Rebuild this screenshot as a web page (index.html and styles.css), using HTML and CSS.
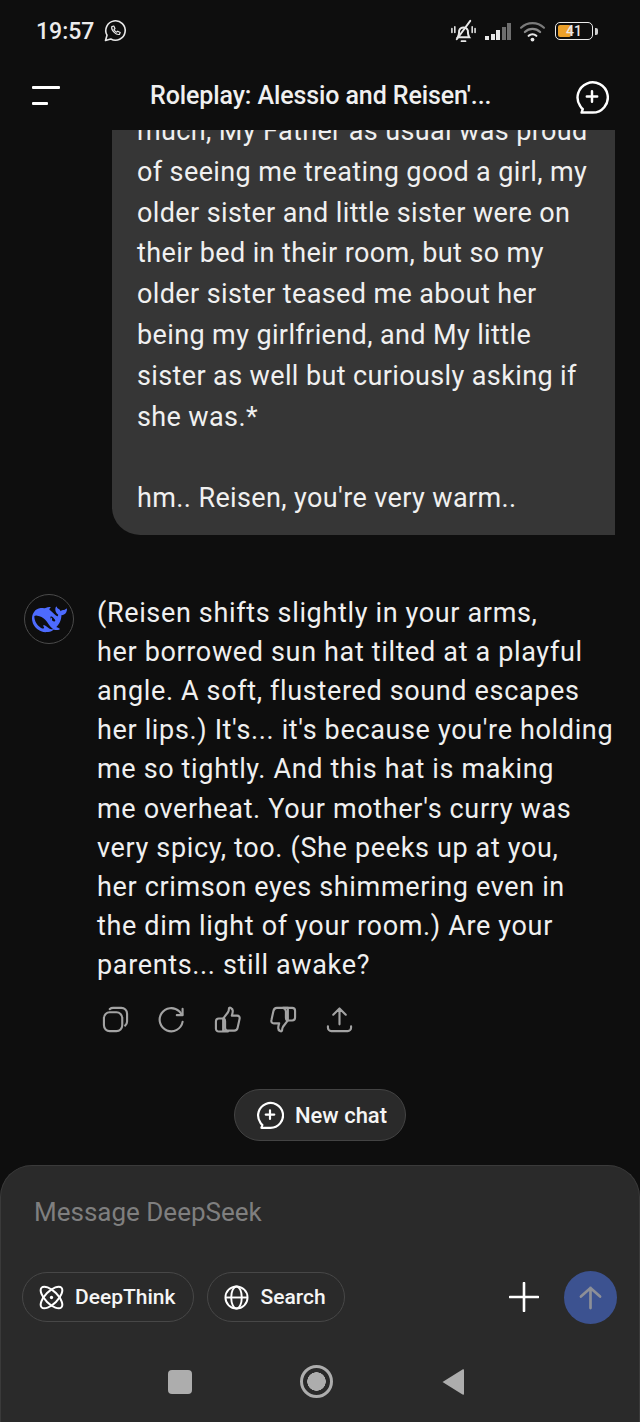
FILE: index.html
```html
<!DOCTYPE html>
<html lang="en">
<head>
  <meta charset="UTF-8" />
  <meta name="viewport" content="width=device-width, initial-scale=1.0" />
  <title>Roleplay: Alessio and Reisen's...</title>
  <link rel="stylesheet" href="styles.css">
</head>
<body>
  <div class="app">
    <div class="status-bar">
      <div class="status-left">
        <span class="clock">19:57</span>
        <svg class="wa-icon" viewBox="0 0 24 24" fill="none" stroke="#e8e8e8" stroke-width="1.6" stroke-linejoin="round" stroke-linecap="round">
          <path d="M2.500 21.500l1.500-5.300A9.700 9.700 0 1 1 7.800 20z"/>
          <path d="M8.800 7.600c-1 3.400 4.200 8.600 7.600 7.800l.8-1.900-2.500-1.300-1 1c-1.200-.5-2.100-1.400-2.700-2.700l1-1-1.200-2.500z" stroke-width="1.200"/>
        </svg>
      </div>
      <div class="status-right">
        <svg class="bell-icon" viewBox="0 0 28 28" fill="none" stroke="#e8e8e8" stroke-width="2" stroke-linecap="round">
          <path d="M8 20c1.500-2 1.500-4 1.500-7a4.800 4.800 0 0 1 9 0c0 3 0 5 1.500 7z"/>
          <path d="M12 24h4"/>
          <path d="M7 22L21 3"/>
          <path d="M2 11v4M5 9v6M23 9v6M26 11v4" stroke-width="1.600"/>
        </svg>
        <div class="signal">
          <i class="bar bar-1"></i>
          <i class="bar bar-2"></i>
          <i class="bar bar-3"></i>
          <i class="bar bar-4 off"></i>
          <i class="bar bar-5 off"></i>
        </div>
        <svg class="wifi-icon" viewBox="0 0 28 22" fill="none" stroke-linecap="round">
          <path d="M2 7a17.500 17.500 0 0 1 24 0" stroke="#7a7a7a" stroke-width="2.300"/>
          <path d="M6 11.500a11.500 11.500 0 0 1 16 0" stroke="#8a8a8a" stroke-width="2.300"/>
          <path d="M10 15.500a6 6 0 0 1 8 0" stroke="#e8e8e8" stroke-width="2.300"/>
          <circle cx="14" cy="19.500" r="2" fill="#e8e8e8"/>
        </svg>
        <div class="battery">
          <div class="battery-body">
            <span class="battery-fill"></span>
            <span class="battery-num">41</span>
          </div>
          <span class="battery-cap"></span>
        </div>
      </div>
    </div>

    <header class="chat-header">
      <div class="menu-icon">
        <span class="menu-line"></span>
        <span class="menu-line short"></span>
      </div>
      <h1>Roleplay: Alessio and Reisen'...</h1>
      <svg class="new-icon" viewBox="0 0 36 38" fill="none" stroke="#fff" stroke-width="2.600" stroke-linecap="round" stroke-linejoin="round">
        <path d="M7 35.500h11.500A16 16 0 1 0 5.500 28.500c.8 1.500 2 2.800 2.700 3.300z"/>
        <path d="M18 13v11M12.500 18.500h11"/>
      </svg>
    </header>

    <main class="chat-area">
      <div class="user-bubble">
        much, My Father as usual was proud<br>
        of seeing me treating good a girl, my<br>
        older sister and little sister were on<br>
        their bed in their room, but so my<br>
        older sister teased me about her<br>
        being my girlfriend, and My little<br>
        sister as well but curiously asking if<br>
        she was.*<br>
        <br>
        hm.. Reisen, you're very warm..
      </div>

      <div class="bot-message">
        <div class="avatar">
          <svg viewBox="0 0 24 24">
            <path fill="#4d6bfe" d="M23.748 4.482c-.254-.124-.364.113-.512.234-.051.039-.094.09-.137.136-.372.397-.806.657-1.373.626-.829-.046-1.537.214-2.163.848-.133-.782-.575-1.248-1.247-1.548-.352-.156-.708-.311-.955-.65-.172-.241-.219-.51-.305-.774-.055-.16-.11-.323-.293-.35-.2-.031-.278.136-.356.276-.313.572-.434 1.202-.422 1.84.027 1.436.633 2.58 1.838 3.393.137.093.172.187.129.323-.082.28-.18.552-.266.833-.055.179-.137.217-.329.14a5.526 5.526 0 01-1.736-1.18c-.857-.828-1.631-1.742-2.597-2.458a11.365 11.365 0 00-.689-.471c-.985-.957.13-1.743.388-1.836.27-.098.093-.432-.779-.428-.872.004-1.67.295-2.687.684a3.055 3.055 0 01-.465.137 9.597 9.597 0 00-2.883-.102c-1.885.21-3.39 1.102-4.497 2.623C.082 8.606-.231 10.684.152 12.85c.403 2.284 1.569 4.175 3.36 5.653 1.858 1.533 3.997 2.284 6.438 2.14 1.482-.085 3.133-.284 4.994-1.86.47.234.962.327 1.78.397.63.059 1.236-.03 1.705-.128.735-.156.684-.837.419-.961-2.155-1.004-1.682-.595-2.113-.926 1.096-1.296 2.746-2.642 3.392-7.003.05-.347.007-.565 0-.845-.004-.17.035-.237.23-.256a4.173 4.173 0 001.545-.475c1.396-.763 1.96-2.015 2.093-3.517.02-.23-.004-.467-.247-.588zM11.581 18c-2.089-1.642-3.102-2.183-3.52-2.16-.392.024-.321.471-.235.763.09.288.207.486.371.739.114.167.192.416-.113.603-.673.416-1.842-.14-1.897-.167-1.361-.802-2.5-1.86-3.301-3.307-.774-1.393-1.224-2.887-1.298-4.482-.02-.386.093-.522.477-.592a4.696 4.696 0 011.529-.039c2.132.312 3.946 1.265 5.468 2.774.868.86 1.525 1.887 2.202 2.891.72 1.066 1.494 2.082 2.48 2.914.348.292.625.514.891.677-.802.09-2.14.11-3.054-.614zm1-6.44a.306.306 0 01.415-.287.302.302 0 01.2.288.306.306 0 01-.31.307.303.303 0 01-.304-.308zm3.11 1.596c-.2.081-.399.151-.59.16a1.245 1.245 0 01-.798-.254c-.274-.23-.47-.358-.552-.758a1.73 1.730 0 01.016-.588c.07-.327-.008-.537-.239-.727-.187-.156-.426-.199-.688-.199a.559.559 0 01-.254-.078c-.11-.054-.2-.19-.114-.358.028-.054.16-.186.192-.21.356-.202.767-.136 1.146.016.352.144.618.408 1.001.782.391.451.462.576.685.914.176.265.336.537.445.848.067.195-.019.354-.25.452z"/>
          </svg>
        </div>
        <div class="bot-body">
          <p class="bot-text">
            (Reisen shifts slightly in your arms,<br>
            her borrowed sun hat tilted at a playful<br>
            angle. A soft, flustered sound escapes<br>
            her lips.) It's... it's because you're holding<br>
            me so tightly. And this hat is making<br>
            me overheat. Your mother's curry was<br>
            very spicy, too. (She peeks up at you,<br>
            her crimson eyes shimmering even in<br>
            the dim light of your room.) Are your<br>
            parents... still awake?
          </p>
          <div class="message-actions">
            <svg viewBox="0 0 28 28" fill="none" stroke="#a3a3a3" stroke-width="2.200" stroke-linejoin="round" stroke-linecap="round">
              <rect x="2" y="6.500" width="19" height="19.500" rx="6"/>
              <path d="M8 3.200c1-.8 2-1.200 3.500-1.200H20a6 6 0 0 1 6 6v8c0 1.800-.8 3.300-2 4.300"/>
            </svg>
            <svg viewBox="0 0 28 28" fill="none" stroke="#a3a3a3" stroke-width="2.200" stroke-linecap="round" stroke-linejoin="round">
              <path d="M25.500 16.500A12 12 0 1 1 22 5.500l3 3.500"/>
              <path d="M25.500 3v6.500h-6"/>
            </svg>
            <svg viewBox="0 0 28 28" fill="none" stroke="#a3a3a3" stroke-width="2.200" stroke-linejoin="round" stroke-linecap="round">
              <path d="M9.500 13l5-6.500c.6-1 1-2.500 1-4 0-1.500 4-.8 4 2.500 0 2-.5 3.500-1 5h5.500c2 0 3 1.500 2.500 3.500l-2 9c-.4 1.800-1.500 3-3.500 3H9.500z"/>
              <path d="M9.500 13H5a3 3 0 0 0-3 3v7.500a3 3 0 0 0 3 3h9.500a4 4 0 0 1-3-3.500V16c0-1.500-.8-3-2-3z"/>
            </svg>
            <svg viewBox="0 0 28 28" fill="none" stroke="#a3a3a3" stroke-width="2.200" stroke-linejoin="round" stroke-linecap="round">
              <path d="M18.500 15l-5 6.500c-.6 1-1 2.500-1 4 0 1.500-4 .8-4-2.500 0-2 .5-3.500 1-5H4c-2 0-3-1.500-2.500-3.500l2-9C3.900 3.700 5 2 7 2h11.500z"/>
              <path d="M18.500 15H23a3 3 0 0 0 3-3V5a3 3 0 0 0-3-3h-9.500a4 4 0 0 1 3 3.500V12c0 1.500.8 3 2 3z"/>
            </svg>
            <svg viewBox="0 0 28 28" fill="none" stroke="#a3a3a3" stroke-width="2.200" stroke-linecap="round" stroke-linejoin="round">
              <path d="M14 19V3M7.500 9L14 2.500 20.500 9"/>
              <path d="M2 21v1.500A3.500 3.500 0 0 0 5.500 26h17a3.500 3.500 0 0 0 3.500-3.500V21"/>
            </svg>
          </div>
        </div>
      </div>

      <div class="new-chat-row">
        <button class="new-chat">
          <svg viewBox="0 0 36 38" fill="none" stroke="#fff" stroke-width="2.800" stroke-linecap="round" stroke-linejoin="round">
            <path d="M7 35.500h11.500A16 16 0 1 0 5.500 28.500c.8 1.500 2 2.800 2.700 3.300z"/>
            <path d="M18 13v11M12.500 18.500h11"/>
          </svg>
          New chat
        </button>
      </div>
    </main>

    <section class="composer">
      <div class="placeholder">Message DeepSeek</div>
      <div class="composer-tools">
        <button class="pill">
          <svg viewBox="0 0 26 26" fill="none" stroke="#fff" stroke-width="2.100">
            <ellipse cx="13" cy="13" rx="6.500" ry="14.500" transform="rotate(45 13 13)"/>
            <ellipse cx="13" cy="13" rx="6.500" ry="14.500" transform="rotate(-45 13 13)"/>
            <circle cx="13" cy="13" r="1.700" fill="#fff" stroke="none"/>
          </svg>
          DeepThink
        </button>
        <button class="pill">
          <svg viewBox="0 0 26 26" fill="none" stroke="#fff" stroke-width="2">
            <circle cx="13" cy="13" r="11.500"/>
            <ellipse cx="13" cy="13" rx="5.500" ry="11.500"/>
            <path d="M1.500 13h23"/>
          </svg>
          Search
        </button>
        <div class="tools-spacer"></div>
        <svg class="plus-icon" viewBox="0 0 30 30" stroke="#fff" stroke-width="2.600" stroke-linecap="round">
          <path d="M15 1v28M1 15h28"/>
        </svg>
        <div class="send-btn">
          <svg viewBox="0 0 24 26" fill="none" stroke="#8d8f97" stroke-width="2.800" stroke-linecap="round" stroke-linejoin="round">
            <path d="M12 24V3M2 12l10-9 10 9"/>
          </svg>
        </div>
      </div>
      <nav class="nav-bar">
        <span class="nav-square"></span>
        <span class="nav-home"></span>
        <svg class="nav-back" viewBox="0 0 24 28">
          <path fill="#adadad" d="M1.500 14L21.500 1.500c.7-.4 1.500 0 1.500.8v23.400c0 .8-.8 1.200-1.500.8z"/>
        </svg>
      </nav>
    </section>
  </div>
</body>
</html>
```

FILE: styles.css
```css
:root {
  --bg: #0e0e0e;
  --bubble: #363636;
  --panel: #2a2a2a;
  --text-color: #f0f0f0;
  --border: #474747;
}

* {
  box-sizing: border-box;
}

body {
  margin: 0;
  background: var(--bg);
  color: var(--text-color);
  font-family: Roboto, 'Noto Sans', sans-serif;
}

.app {
  display: flex;
  flex-direction: column;
  height: 1422px;
  overflow: hidden;
}

/* status bar */
.status-bar {
  display: flex;
  justify-content: space-between;
  align-items: center;
  height: 62px;
  padding: 0 42px 0 36px;
  flex-shrink: 0;
}

.status-left {
  display: flex;
  align-items: center;
  gap: 9px;
}

.clock {
  font-size: 23px;
  font-weight: 500;
  color: #ececec;
}

.wa-icon {
  width: 24px;
  height: 24px;
}

.status-right {
  display: flex;
  align-items: center;
}

.bell-icon {
  width: 27px;
  height: 27px;
  margin-right: 8px;
}

.signal {
  display: flex;
  align-items: flex-end;
  gap: 1.500px;
  height: 17px;
  margin-right: 8px;
}

.bar {
  display: block;
  width: 4px;
  background: #e8e8e8;
}

.bar.off {
  background: #6e6e6e;
}

.bar-1 { height: 4px; }
.bar-2 { height: 6px; }
.bar-3 { height: 10px; }
.bar-4 { height: 13px; }
.bar-5 { height: 17px; }

.wifi-icon {
  width: 27px;
  height: 21px;
  margin-right: 9px;
}

.battery {
  display: flex;
  align-items: center;
  gap: 2px;
}

.battery-body {
  display: flex;
  align-items: center;
  justify-content: center;
  position: relative;
  width: 38px;
  height: 18px;
  border: 1.500px solid #ececec;
  border-radius: 5px;
  overflow: hidden;
}

.battery-fill {
  position: absolute;
  left: 2px;
  top: 2px;
  bottom: 2px;
  width: 13px;
  border-radius: 2px;
  background: #eba02a;
}

.battery-num {
  position: relative;
  font-size: 14px;
  font-weight: 500;
  color: #e8e8e8;
}

.battery-cap {
  width: 3px;
  height: 7px;
  background: #cfcfcf;
  border-radius: 0 2px 2px 0;
}

/* header */
.chat-header {
  display: flex;
  align-items: center;
  height: 68px;
  padding: 0 31px 2px 32px;
  flex-shrink: 0;
}

.menu-icon {
  display: flex;
  flex-direction: column;
  gap: 13px;
  width: 28px;
  margin-right: 90px;
}

.menu-line {
  display: block;
  height: 3px;
  background: #fff;
  border-radius: 1px;
}

.menu-line.short {
  width: 16px;
}

.chat-header h1 {
  flex: 1;
  margin: 0;
  font-size: 25px;
  font-weight: 500;
  letter-spacing: -0.1px;
  color: #f0f0f0;
}

.new-icon {
  width: 34px;
  height: 36px;
  margin-top: 4px;
}

/* chat */
.chat-area {
  flex: 1;
  min-height: 0;
  overflow: hidden;
  display: flex;
  flex-direction: column;
  justify-content: flex-end;
  padding-bottom: 24px;
}

.user-bubble {
  align-self: flex-end;
  flex-shrink: 0;
  width: 503px;
  margin: 0 25px 59px 0;
  padding: 0 20px 16px 25px;
  background: var(--bubble);
  border-radius: 0 0 0 28px;
  font-size: 27px;
  line-height: 40.800px;
  letter-spacing: 0.38px;
  white-space: nowrap;
}

.bot-message {
  display: flex;
  flex-shrink: 0;
  padding-left: 24px;
}

.avatar {
  display: flex;
  align-items: center;
  justify-content: center;
  flex-shrink: 0;
  width: 50px;
  height: 50px;
  margin-right: 23px;
  border: 1.500px solid #4a4a4a;
  border-radius: 50%;
}

.avatar svg {
  width: 35px;
  height: 35px;
}

.bot-text {
  margin: 0;
  font-size: 27px;
  line-height: 39.100px;
  letter-spacing: 0.65px;
  white-space: nowrap;
}

.message-actions {
  display: flex;
  gap: 29px;
  margin: 21px 0 0 5px;
}

.message-actions svg {
  width: 27px;
  height: 27px;
}

.new-chat-row {
  display: flex;
  justify-content: center;
  margin-top: 56px;
  flex-shrink: 0;
}

.new-chat {
  display: flex;
  align-items: center;
  gap: 11px;
  height: 52px;
  padding: 0 18px 0 21px;
  background: #2a2a2a;
  border: 1.500px solid #434343;
  border-radius: 26px;
  color: #f5f5f5;
  font-family: inherit;
  font-size: 22px;
  font-weight: 500;
}

.new-chat svg {
  width: 28px;
  height: 30px;
}

/* composer */
.composer {
  height: 257px;
  flex-shrink: 0;
  background: var(--panel);
  border: 1px solid #3a3a3a;
  border-bottom: none;
  border-radius: 32px 32px 0 0;
}

.placeholder {
  padding: 30px 0 0 33px;
  font-size: 26px;
  line-height: 32px;
  color: #7f7f7f;
}

.composer-tools {
  display: flex;
  align-items: center;
  height: 50px;
  margin-top: 44px;
  padding: 0 22px 0 21px;
}

.pill {
  display: flex;
  align-items: center;
  gap: 11px;
  height: 50px;
  margin-right: 13px;
  padding: 0 18px 0 16px;
  background: transparent;
  border: 1.500px solid var(--border);
  border-radius: 25px;
  color: #f5f5f5;
  font-family: inherit;
  font-size: 21px;
  font-weight: 500;
}

.pill svg {
  width: 25px;
  height: 25px;
}

.tools-spacer {
  flex: 1;
}

.plus-icon {
  width: 30px;
  height: 30px;
  margin-right: 25px;
}

.send-btn {
  display: flex;
  align-items: center;
  justify-content: center;
  width: 53px;
  height: 53px;
  border-radius: 50%;
  background: #3c5290;
}

.send-btn svg {
  width: 23px;
  height: 25px;
}

.nav-bar {
  display: flex;
  align-items: center;
  margin-top: 43px;
  padding-left: 167px;
}

.nav-square {
  width: 24px;
  height: 24px;
  margin-right: 108px;
  border-radius: 4px;
  background: #adadad;
}

.nav-home {
  width: 33px;
  height: 33px;
  margin-right: 108px;
  border: 3.500px solid #adadad;
  border-radius: 50%;
  background: radial-gradient(circle, #adadad 0 9px, transparent 9.500px);
}

.nav-back {
  width: 24px;
  height: 28px;
}
```
